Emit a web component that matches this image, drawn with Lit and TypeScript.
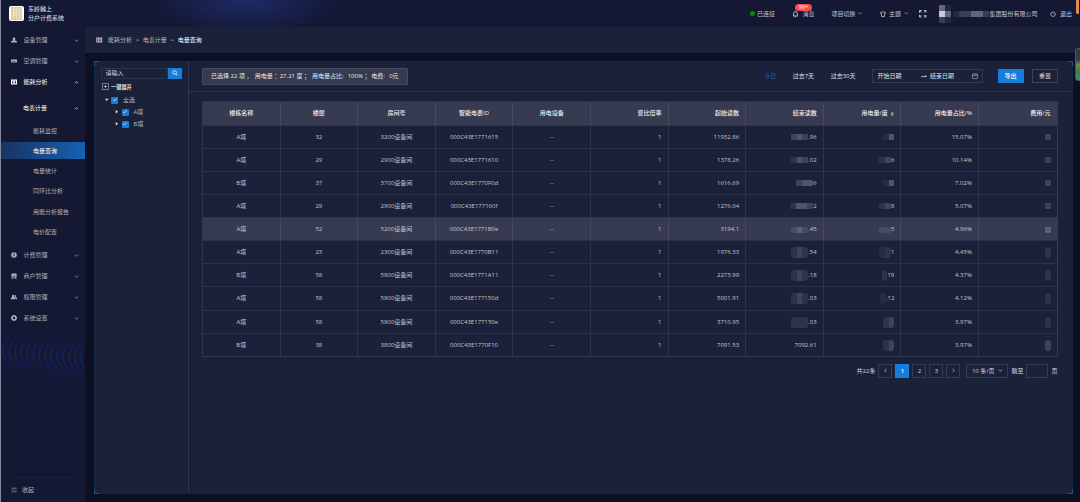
import { LitElement, html, css, svg } from "lit";
import { customElement } from "lit/decorators.js";
import { classMap } from "lit/directives/class-map.js";

const glyphs: Record<string, any> = {
  user: svg`<path d="M7 1.2a3 3 0 0 1 3 3v1a3 3 0 0 1-6 0v-1a3 3 0 0 1 3-3zM0 10.400c1-1.500 3-2 7-2s6 .5 7 2v2.600H0z"/>`,
  air: svg`<path fill-rule="evenodd" d="M0 3.5h14v7H0zM2 7.4h7v1.1H2zM10.5 7.4h1.5v1.1h-1.5z"/>`,
  chart: svg`<path fill-rule="evenodd" d="M0 1h14v12H0zM2.6 4h1.6v6.6H2.6zM6 6.5h1.5v4H6zM9.4 4h1.9v6.6H9.4zM5.5 3h2.5v1.3H5.5z"/>`,
  coin: svg`<path fill-rule="evenodd" d="M7 .5a6.5 6.5 0 1 1 0 13a6.5 6.5 0 0 1 0-13zM5.8 3.5v7h2.4v-7z"/>`,
  shop: svg`<path fill-rule="evenodd" d="M2 1h10l2 3.5v1.7H0V4.500zM1.300 7.400h11.400V13H1.300zM4.500 9.200h5V11h-5z"/>`,
  people: svg`<path d="M5 1.500a2.800 2.800 0 0 1 1.500 5.200C9 7.500 10 9 10 12H0c0-3 1-4.500 3.500-5.300A2.800 2.800 0 0 1 5 1.500zM9.500 2.500a2.300 2.300 0 0 1 1.500 4.200c2 .700 3 2.300 3 5.300h-3c0-2.600-.700-4-2.200-5.300z"/>`,
  gear: svg`<path fill-rule="evenodd" d="M5.500 0h3l.600 1.700 1.800-.700 2 2-.700 1.900 1.800.600v3l-1.800.600.700 1.900-2 2-1.800-.700-.600 1.700h-3l-.600-1.700-1.800.700-2-2 .700-1.900L0 8.500v-3l1.800-.600L1.100 3l2-2 1.800.700zM7 4.200a2.800 2.800 0 1 0 0 5.600a2.800 2.800 0 0 0 0-5.600z"/>`,
  fold: svg`<path d="M1 2h12v1.600H1zM1 6.200h12v1.600H1zM1 10.400h12V12H1z" opacity=".8"/>`,
  down: svg`<path class="line" d="M2.500 4.500L7 9.500l4.500-5"/>`,
  up: svg`<path class="line" d="M2.500 9.500L7 4.500l4.500 5"/>`,
  left: svg`<path class="line" d="M9.500 2.500L4.500 7l5 4.500"/>`,
  right: svg`<path class="line" d="M4.500 2.500l5 4.500-5 4.500"/>`,
  bell: svg`<path class="line" d="M2 11h10M3.200 11V6a3.800 3.800 0 0 1 7.600 0v5M5.800 13h2.400M7 .5v1.700"/>`,
  shirt: svg`<path class="line" d="M4.500 1.500L1 3.500l1 3 1.500-.500V13h7V6l1.500.500 1-3-3.500-2c-1 1.700-4 1.700-5 0z"/>`,
  full: svg`<path class="line" d="M1 5V1h4M9 1h4v4M13 9v4H9M5 13H1V9M1.500 1.500L4.500 4.500M12.500 1.500L9.500 4.500M12.500 12.500L9.500 9.500M1.500 12.500L4.500 9.500"/>`,
  power: svg`<path class="line" d="M4 2.500a5.500 5.500 0 1 0 6 0M7 .500v6"/>`,
  search: svg`<path class="line" d="M9 9l4 4M6 1.500a4.300 4.300 0 1 1 0 8.600a4.300 4.300 0 0 1 0-8.600z"/>`,
  check: svg`<path class="line" d="M3 7l3 3 5.500-6"/>`,
  arrow: svg`<path class="line" d="M0 8.500h13L9.500 5"/>`,
  cal: svg`<path class="line" d="M1 2.500h12V13H1zM1 6h12M4.300 .500v3M9.700 .500v3"/>`,
  plus: svg`<path class="line" d="M3 7h8M7 3v8"/>`,
  caretDown: svg`<path d="M0 3h14L7 12z"/>`,
  caretRight: svg`<path d="M3 0v14L12 7z"/>`,
  sort: svg`<path d="M2.500 6l4.500-6 4.500 6zM2.500 8l4.500 6 4.500-6z"/>`,
};

const icon = (name: string, cls = "") =>
  html`<svg class="ic ${cls}" viewBox="0 0 14 14">${glyphs[name]}</svg>`;

/** Dotted wave pattern drawn behind the navigation. */
function sideDots() {
  const out: any[] = [];
  for (let i = -5; i < 18; i++) {
    for (let j = 0; j < 46; j++) {
      const y = 4 + j * 2.2 + i * 0.5;
      const mid = 48 + i * 0.5;
      const d = (y - mid) / 15;
      const x = i * 6 + 8 * d * d * (d < 0 ? 0.8 : 1.2) + 3;
      const spread = y < mid ? 16 : 17 + i * 0.6;
      const o = Math.exp(-Math.pow((y - mid) / spread, 2)) * 0.7;
      if (x > 0 && x < 84.5 && o > 0.04)
        out.push(svg`<circle cx=${x.toFixed(1)} cy=${y.toFixed(1)} r=".85" opacity=${o.toFixed(2)} />`);
    }
  }
  return out;
}

function topDots() {
  const out: any[] = [];
  for (let i = 0; i < 82; i++) {
    for (let j = 0; j < 10; j++) {
      const x = i * 3.4;
      const y = j * 3 + 4 * Math.sin(x / 26) - 1;
      const o = 0.26 * Math.exp(-Math.pow((x - 135) / 90, 2)) * (1 - j / 11);
      if (o > 0.03 && y < 27)
        out.push(svg`<circle cx=${x.toFixed(1)} cy=${y.toFixed(1)} r=".6" opacity=${o.toFixed(2)} />`);
    }
  }
  return out;
}

type Masked = { blocks: number[]; tail: string; tall?: boolean };
type Row = { t: string; f: string; room: string; id: string; start: string; end: Masked; use: Masked; ratio: string; fee: number };

const m = (blocks: number[], tail = "", tall = false): Masked => ({ blocks, tail, tall });

const rows: Row[] = [
  { t: "A塔", f: "32", room: "3200设备间", id: "000C43E1771615", start: "11932.86", end: m([3, 4, 3], ".96"), use: m([1, 4]), ratio: "15.07%", fee: 3 },
  { t: "A塔", f: "29", room: "2900设备间", id: "000C43E1771610", start: "1378.26", end: m([2, 4, 3], ".02"), use: m([2, 3], "6"), ratio: "10.14%", fee: 3 },
  { t: "B塔", f: "37", room: "3700设备间", id: "000C43E1770F0d", start: "1616.69", end: m([3, 4, 4], "6"), use: m([1, 4]), ratio: "7.02%", fee: 3 },
  { t: "A塔", f: "29", room: "2900设备间", id: "000C43E177160f", start: "1276.04", end: m([2, 4, 4, 3], "2"), use: m([2, 3], "8"), ratio: "5.07%", fee: 3 },
  { t: "A塔", f: "52", room: "5200设备间", id: "000C43E1771B0e", start: "3194.1", end: m([3, 4, 3], ".45"), use: m([3, 3], "5"), ratio: "4.96%", fee: 4 },
  { t: "A塔", f: "23", room: "2300设备间", id: "000C43E1770B11", start: "1976.33", end: m([2, 3, 2], ".54", true), use: m([1, 2], "1", true), ratio: "4.45%", fee: 2 },
  { t: "B塔", f: "58", room: "5800设备间", id: "000C43E1771A11", start: "2273.99", end: m([2, 3, 2], ".18", true), use: m([2], "19", true), ratio: "4.37%", fee: 2 },
  { t: "A塔", f: "58", room: "5800设备间", id: "000C43E177150d", start: "5001.91", end: m([2, 3, 2], ".03", true), use: m([1], ".12", true), ratio: "4.12%", fee: 2 },
  { t: "A塔", f: "58", room: "5800设备间", id: "000C43E177150e", start: "3710.95", end: m([2, 2, 2], ".03", true), use: m([2, 3], "", true), ratio: "3.97%", fee: 2 },
  { t: "B塔", f: "38", room: "3800设备间", id: "000C43E1770F10", start: "7091.53", end: m([], "7092.61"), use: m([2, 3], "", true), ratio: "3.97%", fee: 3 },
];

const shared = css`
  * { box-sizing: border-box; }
  .ic { width: 6px; height: 6px; fill: currentColor; flex: none; display: block; overflow: visible; }
  .ic .line { fill: none; stroke: currentColor; stroke-width: 1.8; }
`;

@customElement("side-nav")
export class SideNav extends LitElement {
  static styles = [shared, css`
    :host { display: flex; flex-direction: column; position: relative; width: 85px; height: 475px; color: #b0b2bc; flex: none; }
    .waves { position: absolute; left: 0; top: 277px; width: 85px; height: 130px; fill: #15319c; }
    .item { height: 21.1px; display: flex; align-items: center; padding: 0 6.500px 0 11px; position: relative; flex: none; }
    .item .name { margin-left: 6.500px; flex: 1; }
    .item .chev { width: 5px; height: 5px; }
    .open, .group { color: #fff; }
    .group { height: 24.600px; margin-top: 3px; padding: 0 6.500px 0 16.500px; }
    .sub { height: 20.300px; display: flex; align-items: center; padding-left: 33px; flex: none; position: relative; }
    .on { height: 17.300px; margin: 1.500px 0; color: #fff; background: linear-gradient(90deg, #1a3262, #1561b2); }
    .gap { height: 2.500px; flex: none; }
    .foot { margin: auto 10px 0 11px; border-top: 1px solid #1d2234; height: 25px; display: flex; align-items: center; gap: 5px; padding-bottom: 1px; }
  `];
  private item(ic: string, name: string, open = false) {
    return html`<div class=${classMap({ item: true, open })}>${icon(ic)}<span class="name">${name}</span>${icon(open ? "up" : "down", "chev")}</div>`;
  }
  render() {
    return html`
      <svg class="waves">${sideDots()}</svg>
      <div class="gap"></div>
      ${this.item("user", "设备管理")}${this.item("air", "空调管理")}${this.item("chart", "能耗分析", true)}
      <div class="item group"><span class="name">电表计量</span>${icon("up", "chev")}</div>
      <div>
        ${["能耗监控", "电量查询", "电量统计", "同环比分析", "用能分析报告", "电价配置"].map((s) =>
          html`<div class=${classMap({ sub: true, on: s === "电量查询" })}>${s}</div>`)}
      </div>
      <div class="gap"></div>
      ${this.item("coin", "计费管理")}${this.item("shop", "商户管理")}${this.item("people", "权限管理")}${this.item("gear", "系统设置")}
      <div class="foot">${icon("fold")}<span>收起</span></div>`;
  }
}

@customElement("top-bar")
export class TopBar extends LitElement {
  static styles = [shared, css`
    :host { display: flex; align-items: center; height: 27px; position: relative; padding: 0 8px 0 9px; color: #c6c7d0; }
    .glow { position: absolute; left: 108px; top: 0; width: 270px; height: 27px; background: radial-gradient(ellipse 95px 36px at 137px 0, #1d2a65, transparent); fill: #3653b8; }
    .logo { width: 15px; height: 15px; border-radius: 2px; background: #fff; display: flex; align-items: center; justify-content: center; position: relative; }
    .logo svg { width: 11px; height: 13px; }
    .title { margin-left: 4px; line-height: 8.600px; color: #e6e7ec; padding-top: 1px; position: relative; }
    .right { margin-left: auto; display: flex; align-items: center; }
    .led { width: 5px; height: 5px; border-radius: 50%; background: #078a0b; margin-right: 2px; }
    .msg { display: flex; align-items: center; gap: 3px; margin-left: 17.500px; position: relative; }
    .msg .ic { width: 7px; height: 8px; }
    .badge { position: absolute; left: 2.500px; top: -5.500px; width: 17px; height: 6.500px; border-radius: 4px; background: #fb4b4f; color: #fff; font-size: 5.500px; font-weight: 400; line-height: 6.500px; text-align: center; }
    .drop { display: flex; align-items: center; gap: 3px; margin-left: 17px; }
    .small { width: 4.500px; height: 4.500px; }
    .full { width: 7.500px; height: 7.500px; margin-left: 11px; }
    .firm { display: flex; align-items: center; margin-left: 12.500px; }
    .px { width: 6px; height: 6px; }
    .stack { display: grid; grid-template-columns: 6px 6px; margin-right: 2px; }
    .a { background: #c9cad6; } .b { background: #63667a; } .c { background: #3a3d55; } .d { background: #242842; }
    .out { display: flex; align-items: center; gap: 4px; margin-left: 12.500px; }
  `];
  render() {
    return html`
      <svg class="glow">${topDots()}</svg>
      <div class="logo"><svg viewBox="0 0 11 13"><rect width="11" height="13" fill="#dfcda4"/><path d="M2.500 11V2.500h3V11M7 2h2v9H7M2.500 5.500h3M2.500 8h3M7 4.500h2M7 7.500h2" fill="none" stroke="#f6ecd0" stroke-width=".8"/></svg></div>
      <div class="title">东岭樾上<br />分户计费系统</div>
      <div class="right">
        <i class="led"></i><span>已连接</span>
        <div class="msg">${icon("bell")}<span>消息</span><b class="badge">99+</b></div>
        <div class="drop"><span>项目切换</span>${icon("down", "small")}</div>
        <div class="drop">${icon("shirt")}<span>主题</span>${icon("down", "small")}</div>
        ${icon("full", "full")}
        <div class="firm">
          <div class="stack"><i class="px b"></i><i class="px d"></i><i class="px a"></i><i class="px b"></i><i class="px c"></i><i class="px d"></i></div>
          ${["d", "c", "c", "b", "b", "c"].map((c) => html`<i class="px ${c}"></i>`)}
          <span>集团股份有限公司</span>
        </div>
        <div class="out">${icon("power")}<span>退出</span></div>
      </div>`;
  }
}

@customElement("meter-tree")
export class MeterTree extends LitElement {
  static styles = [shared, css`
    :host { box-sizing: border-box; display: block; width: 94px; flex: none; padding: 6px 6px 0 6.500px; border-right: 1px solid #30364d; color: #b6b8c3; }
    .search { display: flex; height: 10.500px; }
    .field { flex: 1; border: 1px solid #2c334c; padding-left: 3.500px; display: flex; align-items: center; color: #dcdde4; }
    .go { width: 14px; background: #177ddc; color: #fff; display: flex; align-items: center; justify-content: center; border-radius: 0 1px 1px 0; }
    .all { display: flex; align-items: center; gap: 2px; height: 8px; margin: 4px 0 3.500px 1px; font-size: 5.200px; font-weight: 700; color: #e4e5ec; }
    .box { width: 7px; height: 7px; border: 1px solid #74788a; display: flex; align-items: center; justify-content: center; }
    .box .ic { width: 5px; height: 5px; }
    .node { display: flex; align-items: center; height: 12px; padding-left: 3.500px; }
    .kid { padding-left: 14px; }
    .caret { width: 3.500px; height: 3.500px; color: #e6e6ec; margin-right: 3px; }
    .tick { width: 7px; height: 7px; background: #177ddc; color: #fff; border-radius: 1px; margin-right: 5px; display: flex; align-items: center; justify-content: center; }
    .tick .ic { width: 5.500px; height: 5.500px; }
  `];
  render() {
    const tick = html`<i class="tick">${icon("check")}</i>`;
    return html`
      <div class="search"><div class="field">请输入</div><div class="go">${icon("search")}</div></div>
      <div class="all"><i class="box">${icon("plus")}</i>一键展开</div>
      <div class="node">${icon("caretDown", "caret")}${tick}全选</div>
      <div class="node kid">${icon("caretRight", "caret")}${tick}A塔</div>
      <div class="node kid">${icon("caretRight", "caret")}${tick}B塔</div>`;
  }
}

@customElement("query-bar")
export class QueryBar extends LitElement {
  static styles = [shared, css`
    :host { display: flex; align-items: center; height: 29.500px; padding: 0 13.500px 0 13.500px; border-bottom: 1px solid #2d334a; color: #dfe0e6; flex: none; }
    .sum { display: flex; align-items: center; width: 205.500px; height: 17px; padding-left: 8px; background: #343a50; border: 1px solid #464b60; border-radius: 1px; white-space: nowrap; color: #eaebef; }
    .s1 { width: 43.700px; } .s2 { width: 25px; } .s3 { width: 32.200px; } .s4 { width: 35.800px; } .s5 { width: 23.500px; } .s6 { width: 18px; }
    .quick { display: flex; gap: 16.500px; margin-left: auto; }
    .sel { color: #1768bd; }
    .range { display: flex; align-items: center; width: 110.500px; height: 14px; margin-left: 16.500px; padding: 0 4px 0 4.500px; border: 1px solid #343a50; }
    .to { margin: 0 3.500px 0 19px; }
    .cal { margin-left: auto; color: #8b8e9d; }
    .btn { width: 26px; height: 14px; display: flex; align-items: center; justify-content: center; margin-left: 15px; }
    .go { background: #177ddc; color: #fff; font-weight: 500; }
    .line { border: 1px solid #3b4157; margin-left: 8.500px; }
  `];
  render() {
    return html`
      <div class="sum"><span class="s1">已选择 22 项 ，</span><span class="s2">用电量 ：</span><span class="s3">27.21 度 ；</span><span class="s4">用电量占比:</span><span class="s5">100% ；</span><span class="s6">电费:</span><span>0元</span></div>
      <div class="quick"><span class="sel">今日</span><span>过去7天</span><span>过去30天</span></div>
      <div class="range"><span>开始日期</span>${icon("arrow", "to")}<span>结束日期</span>${icon("cal", "cal")}</div>
      <div class="btn go">导出</div><div class="btn line">重置</div>`;
  }
}

@customElement("usage-table")
export class UsageTable extends LitElement {
  static styles = [shared, css`
    :host { display: block; margin: 9.500px 14px 0 13.500px; border: 1px solid #30364c; border-right-color: #353b51; color: #c4c6d0; }
    .row { display: grid; grid-template-columns: repeat(11, 1fr); height: 23.130px; border-top: 1px solid #2c324a; }
    .head { height: 22.500px; background: #363b51; color: #eeeff3; border-top: 0; font-weight: 500; }
    .hover { background: #363b51; }
    .cell { display: flex; align-items: center; justify-content: center; border-right: 1px solid #2d334a; min-width: 0; white-space: nowrap; }
    .cell:last-child { border-right: 0; }
    .head .cell, .hover .cell { border-right-color: #454a5f; }
    .num { justify-content: flex-end; padding-right: 6px; }
    .mask { display: flex; height: 6px; border-radius: 1px; overflow: hidden; margin-top: 1px; }
    .tall { height: 11px; border-radius: 3px; }
    .px { width: 5.800px; height: 100%; }
    .k1 { background: #262c45; } .k2 { background: #2d334b; } .k3 { background: #3d4359; } .k4 { background: #505569; }
    .hover .k3 { background: #474c60; } .hover .k4 { background: #5c6073; }
    .sort { width: 4.500px; height: 5.500px; margin-left: 2px; color: #b8bac6; }
  `];
  private masked(v: Masked) {
    return html`${v.blocks.length ? html`<span class=${classMap({ mask: true, tall: !!v.tall })}>${v.blocks.map((k) => html`<i class="px k${k}"></i>`)}</span>` : ""}${v.tail}`;
  }
  render() {
    const heads = ["楼栋名称", "楼层", "房间号", "智能电表ID", "用电设备", "变比倍率", "起始读数", "结束读数", "用电量/度", "用电量占比/%", "费用/元"];
    return html`
      <div class="row head">${heads.map((h, i) => html`<div class=${classMap({ cell: true, num: i > 4 })}>${h}${i === 8 ? icon("sort", "sort") : ""}</div>`)}</div>
      ${rows.map((r, i) => html`
        <div class=${classMap({ row: true, hover: i === 4 })}>
          ${[r.t, r.f, r.room, r.id, "--"].map((v) => html`<div class="cell">${v}</div>`)}
          <div class="cell num">1</div><div class="cell num">${r.start}</div>
          <div class="cell num">${this.masked(r.end)}</div>
          <div class="cell num">${this.masked(r.use)}</div>
          <div class="cell num">${r.ratio}</div>
          <div class="cell num">${this.masked(m([r.fee], "", i > 4))}</div>
        </div>`)}`;
  }
}

@customElement("page-turner")
export class PageTurner extends LitElement {
  static styles = [shared, css`
    :host { display: flex; align-items: center; justify-content: flex-end; gap: 3px; margin: 7px 14px 0 0; height: 14px; color: #d2d3db; }
    .b { width: 14px; height: 14px; border: 1px solid #373d53; display: flex; align-items: center; justify-content: center; }
    .on { background: #177ddc; border-color: #177ddc; color: #fff; font-weight: 600; }
    .ic { width: 5px; height: 5px; }
    .size { width: 42px; margin-left: 3px; gap: 3.500px; }
    .jump { width: 22px; }
  `];
  render() {
    return html`<span>共22条</span><div class="b">${icon("left")}</div><div class="b on">1</div><div class="b">2</div><div class="b">3</div><div class="b">${icon("right")}</div>
      <div class="b size">10 条/页 ${icon("down")}</div><span>跳至</span><div class="b jump"></div><span>页</span>`;
  }
}

@customElement("app-root")
export class AppRoot extends LitElement {
  static styles = [shared, css`
    :host { display: block; position: relative; width: 1080px; height: 502px; overflow: hidden; background: #141833; font: 6px/8px "Open Sans", "Noto Sans CJK SC", sans-serif; }
    .body { display: flex; height: 475px; }
    .main { flex: 1; background: #0c1022; display: flex; flex-direction: column; }
    .crumbs { height: 26px; background: #1a2139; display: flex; align-items: center; padding-left: 10.500px; color: #b6b8c3; flex: none; }
    .crumbs .ic { margin-right: 6px; width: 6.500px; }
    .sep { margin: 0 3.700px; color: #d6d7de; }
    .here { color: #fff; }
    .panel { margin: 8px 7.500px 8px 8.500px; flex: 1; background: #1b2139; border: 1px solid #17263f; display: flex; position: relative; }
    .right { flex: 1; display: flex; flex-direction: column; min-width: 0; }
    .corner { position: absolute; width: 5px; height: 5px; border: 0 solid #195390; }
    .tl { left: -1px; top: -1px; border-width: 1px 0 0 1px; }
    .tr { right: -1px; top: -1px; border-width: 1px 1px 0 0; }
    .bl { left: -1px; bottom: -1px; border-width: 0 0 1px 1px; }
    .br { right: -1px; bottom: -1px; border-width: 0 1px 1px 0; }
    .edge { position: absolute; left: 0; top: 0; width: 1px; height: 100%; background: #85879a; }
    .tab { position: absolute; right: 1.500px; top: 0; width: 3px; height: 14px; background: #e9894f; border-radius: 0 0 2px 2px; }
    .gauge { position: absolute; right: -3px; top: 48px; width: 8px; height: 33px; border-radius: 3px; border: 1px solid #50535d; background: linear-gradient(#353a47 35%, #80833f 50%, #36815b 75%, #3a897f); }
  `];
  render() {
    return html`
      <top-bar></top-bar>
      <div class="body">
        <side-nav></side-nav>
        <div class="main">
          <div class="crumbs">${icon("chart")}<span>能耗分析</span><span class="sep">&gt;</span><span>电表计量</span><span class="sep">&gt;</span><span class="here">电量查询</span></div>
          <div class="panel">
            <meter-tree></meter-tree>
            <div class="right"><query-bar></query-bar><usage-table></usage-table><page-turner></page-turner></div>
            <i class="corner tl"></i><i class="corner tr"></i><i class="corner bl"></i><i class="corner br"></i>
          </div>
        </div>
      </div>
      <i class="edge"></i><i class="tab"></i><i class="gauge"></i>`;
  }
}
